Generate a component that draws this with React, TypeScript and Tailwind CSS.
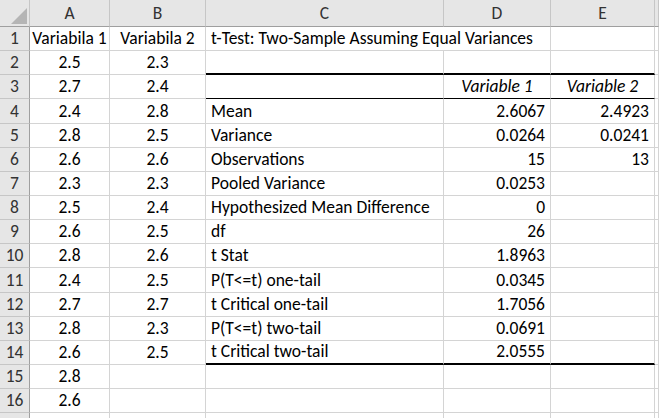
import React from 'react';

type Row = {
  a?: string;
  b?: string;
  c?: string;
  d?: string;
  e?: string;
};

const rows: Row[] = [
  { a: 'Variabila 1', b: 'Variabila 2', c: 't-Test: Two-Sample Assuming Equal Variances' },
  { a: '2.5', b: '2.3' },
  { a: '2.7', b: '2.4', d: 'Variable 1', e: 'Variable 2' },
  { a: '2.4', b: '2.8', c: 'Mean', d: '2.6067', e: '2.4923' },
  { a: '2.8', b: '2.5', c: 'Variance', d: '0.0264', e: '0.0241' },
  { a: '2.6', b: '2.6', c: 'Observations', d: '15', e: '13' },
  { a: '2.3', b: '2.3', c: 'Pooled Variance', d: '0.0253' },
  { a: '2.5', b: '2.4', c: 'Hypothesized Mean Difference', d: '0' },
  { a: '2.6', b: '2.5', c: 'df', d: '26' },
  { a: '2.8', b: '2.6', c: 't Stat', d: '1.8963' },
  { a: '2.4', b: '2.5', c: 'P(T<=t) one-tail', d: '0.0345' },
  { a: '2.7', b: '2.7', c: 't Critical one-tail', d: '1.7056' },
  { a: '2.8', b: '2.3', c: 'P(T<=t) two-tail', d: '0.0691' },
  { a: '2.6', b: '2.5', c: 't Critical two-tail', d: '2.0555' },
  { a: '2.8' },
  { a: '2.6' },
  {},
];

const cell = 'flex items-end pb-[2px] border-r border-b border-[#d4d4d4] whitespace-nowrap';

// borders under the summary table (C:E)
function tableBorder(r: number) {
  if (r === 2) return 'border-b-2 border-b-black';
  if (r === 3) return 'border-b-black';
  if (r === 14) return 'border-b-2 border-b-black';
  return '';
}

export default function App() {
  return (
    <div
      className="w-[659px] h-[418px] overflow-hidden bg-white text-[17.5px] leading-[20px] text-black"
      style={{ fontFamily: 'Carlito, Lato, "Liberation Sans", sans-serif' }}
    >
      <div className="grid grid-cols-[30px_80px_96px_238px_107px_104px_1fr] grid-rows-[27px_repeat(17,24.15px)]">
        {/* column headers */}
        <div className="relative bg-[#e6e6e6] border-r border-b border-r-[#c6c6c6] border-b-[#9f9f9f]">
          <svg className="absolute right-[2px] bottom-[2px]" width="16" height="16" viewBox="0 0 16 16">
            <polygon points="16,0 16,16 0,16" fill="#b5b5b5" />
          </svg>
        </div>
        {['A', 'B', 'C', 'D', 'E', ''].map((h, i) => (
          <div
            key={i}
            className="flex items-end justify-center pb-[3px] bg-[#e6e6e6] border-r border-b border-r-[#c6c6c6] border-b-[#9f9f9f] text-[#333]"
          >
            {h}
          </div>
        ))}

        {rows.map((row, i) => {
          const r = i + 1;
          const tb = tableBorder(r);
          return (
            <React.Fragment key={r}>
              <div className="flex items-end justify-center pb-[2px] bg-[#e6e6e6] border-r border-b border-r-[#9f9f9f] border-b-[#c6c6c6] text-[#333]">
                {r < 17 ? r : ''}
              </div>
              <div className={`${cell} justify-center`}>{row.a}</div>
              <div className={`${cell} justify-center`}>{row.b}</div>
              <div
                className={`${cell} pl-[5px] ${tb} ${r === 1 ? 'border-r-0 overflow-visible relative z-10' : ''}`}
              >
                {row.c}
              </div>
              <div
                className={`${cell} ${r === 3 ? 'justify-center italic' : 'justify-end pr-[5px]'} ${tb}`}
              >
                {row.d}
              </div>
              <div
                className={`${cell} ${r === 3 ? 'justify-center italic' : 'justify-end pr-[5px]'} ${tb}`}
              >
                {row.e}
              </div>
              <div className={cell} />
            </React.Fragment>
          );
        })}
      </div>
    </div>
  );
}
